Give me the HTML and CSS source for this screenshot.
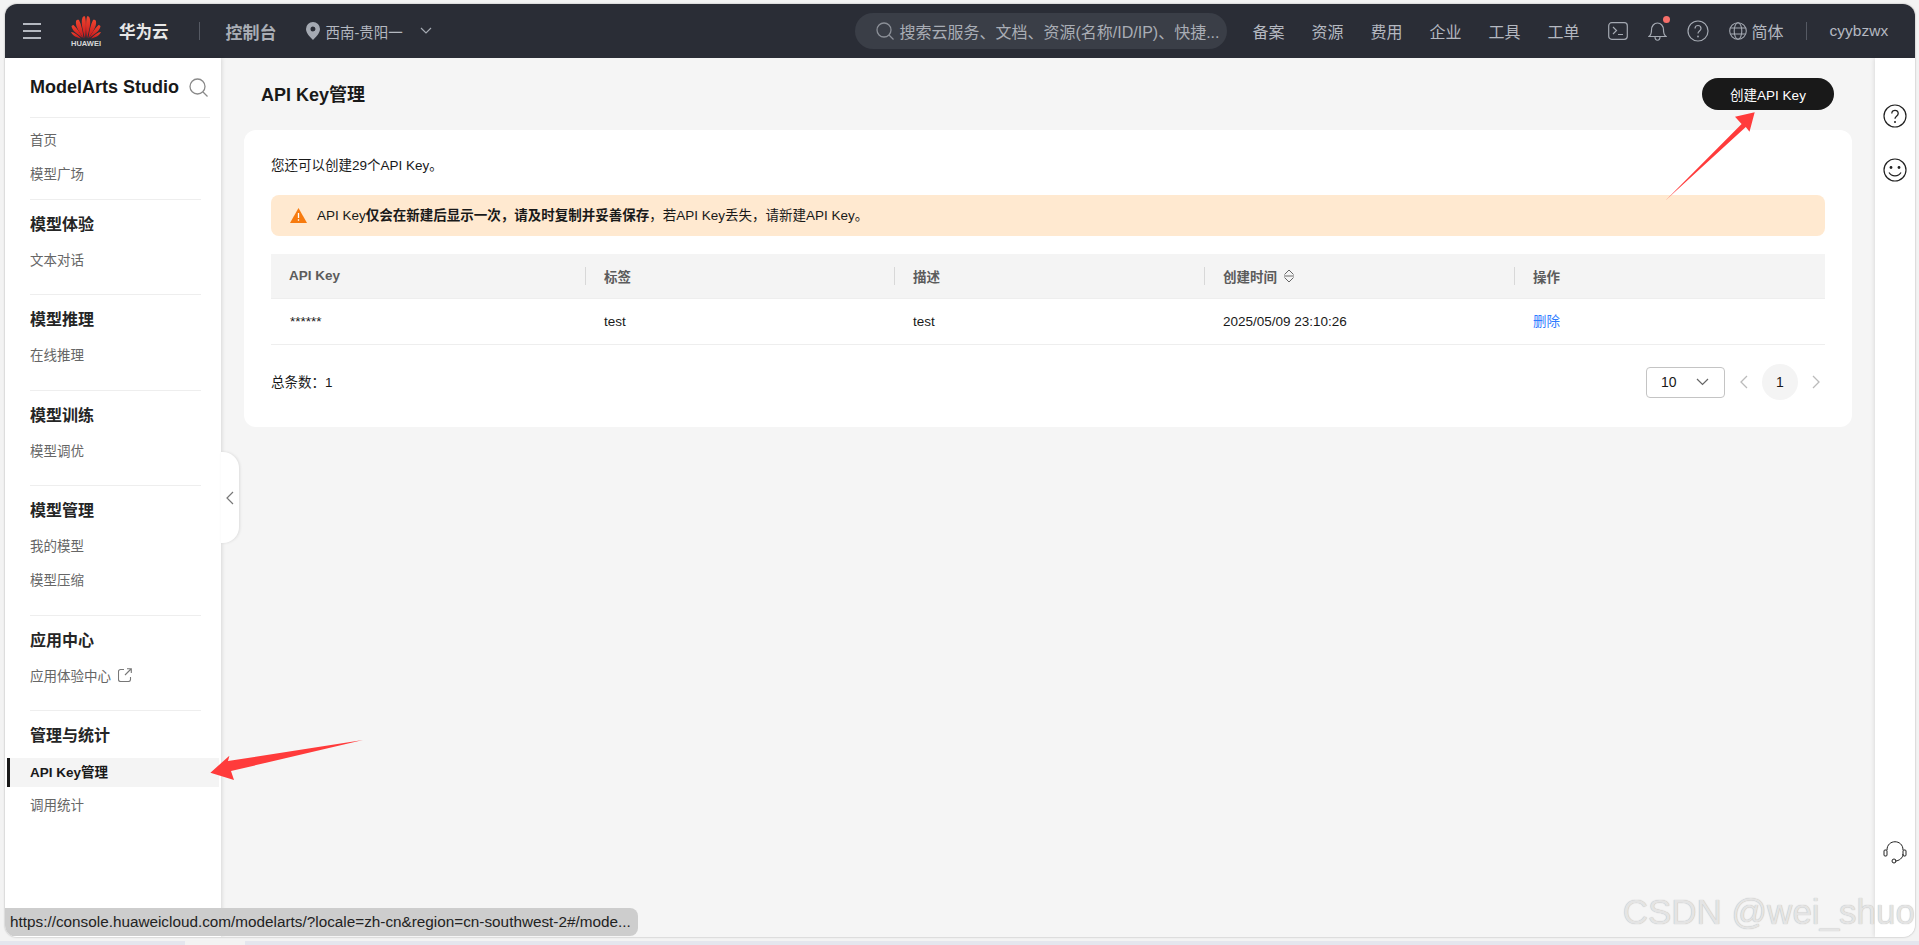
FILE: index.html
```html
<!DOCTYPE html>
<html lang="zh-CN">

<head>
    <meta charset="UTF-8">
    <meta name="viewport" content="width=device-width, initial-scale=1.0">
    <title>API Key管理 - ModelArts Studio</title>
    <link rel="stylesheet" href="styles.css">
</head>

<body>
    <div class="window">
        <header class="topbar">
            <svg class="menu-icon" width="18" height="16" viewBox="0 0 18 16">
                <path d="M0 1h18M0 8h18M0 15h18" stroke="#b4b8c0" stroke-width="2" fill="none" />
            </svg>
            <div class="logo">
                <svg width="30" height="23" viewBox="0 0 60 46">
                    <defs>
                        <linearGradient id="petal" x1="0" y1="0" x2="0" y2="1">
                            <stop offset="0" stop-color="#f0452f" />
                            <stop offset="1" stop-color="#c4161c" />
                        </linearGradient>
                    </defs>
                    <g fill="url(#petal)">
                        <path d="M28 45C24 30 19 12 23 3 25 0 27 0 28 1 31 12 30 30 28 45Z" />
                        <path d="M32 45C36 30 41 12 37 3 35 0 33 0 32 1 29 12 30 30 32 45Z" />
                        <path d="M25 45C18 33 8 22 10 10 11 8 14 7 16 8 21 18 24 32 25 45Z" />
                        <path d="M35 45C42 33 52 22 50 10 49 8 46 7 44 8 39 18 36 32 35 45Z" />
                        <path d="M23 44C15 37 4 32 1 21 1 20 3 18 5 18 13 25 19 35 23 44Z" />
                        <path d="M37 44C45 37 56 32 59 21 59 20 57 18 55 18 47 25 41 35 37 44Z" />
                        <path d="M20 45C13 43 5 42 0 32 6 32 14 38 20 45Z" />
                        <path d="M40 45C47 43 55 42 60 32 54 32 46 38 40 45Z" />
                    </g>
                </svg>
                <span class="logo-text">HUAWEI</span>
            </div>
            <span class="brand">华为云</span>
            <span class="bar-line"></span>
            <span class="console">控制台</span>
            <svg class="pin" width="14" height="18" viewBox="0 0 14 18">
                <path d="M7 0a7 7 0 0 0-7 7c0 4 4 8 7 11 3-3 7-7 7-11a7 7 0 0 0-7-7Zm0 9.5a2.5 2.5 0 1 1 0-5 2.5 2.5 0 0 1 0 5Z" fill="#a4a9b2" />
            </svg>
            <span class="region">西南-贵阳一</span>
            <svg class="region-arrow" width="12" height="8" viewBox="0 0 12 8">
                <path d="M1 1l5 5 5-5" stroke="#a4a9b2" stroke-width="1.2" fill="none" />
            </svg>

            <div class="search">
                <svg width="18" height="18" viewBox="0 0 18 18">
                    <circle cx="8" cy="8" r="7" stroke="#8b8f97" stroke-width="1.3" fill="none" />
                    <path d="M13 13l4.5 4.5" stroke="#8b8f97" stroke-width="1.3" />
                </svg>
                <span class="search-text">搜索云服务、文档、资源(名称/ID/IP)、快捷...</span>
            </div>

            <nav class="top-nav">
                <a>备案</a>
                <a>资源</a>
                <a>费用</a>
                <a>企业</a>
                <a>工具</a>
                <a>工单</a>
            </nav>

            <div class="top-icons">
                <svg width="20" height="18" viewBox="0 0 20 18">
                    <rect x="0.7" y="0.7" width="18.6" height="16.6" rx="3" stroke="#a4a9b2" stroke-width="1.2" fill="none" />
                    <path d="M5 5l3.5 3.5L5 12M10 12.5h5" stroke="#a4a9b2" stroke-width="1.2" fill="none" />
                </svg>
                <span class="bell">
                    <svg width="19" height="20" viewBox="0 0 19 20">
                        <path d="M1 15.5c2-1.5 2.5-3 2.5-6.5 0-4 2.5-7 6-7s6 3 6 7c0 3.5.5 5 2.5 6.5ZM7 15.5c0 5 5 5 5 0" stroke="#a4a9b2" stroke-width="1.2" fill="none" />
                    </svg>
                    <i class="dot"></i>
                </span>
                <svg width="22" height="22" viewBox="0 0 22 22">
                    <circle cx="11" cy="11" r="10" stroke="#a4a9b2" stroke-width="1.2" fill="none" />
                    <path d="M8 8.5c0-4 6-4 6 0 0 2.5-3 2.5-3 5" stroke="#a4a9b2" stroke-width="1.2" fill="none" />
                    <circle cx="11" cy="16.5" r="0.9" fill="#a4a9b2" />
                </svg>
                <span class="lang">
                    <svg width="18" height="18" viewBox="0 0 18 18">
                        <g stroke="#a4a9b2" stroke-width="1.1" fill="none">
                            <circle cx="9" cy="9" r="8.3" />
                            <ellipse cx="9" cy="9" rx="3.8" ry="8.3" />
                            <path d="M1.5 6h15M1.5 12h15" />
                        </g>
                    </svg>
                    简体
                </span>
            </div>
            <span class="bar-line user-line"></span>
            <span class="user">cyybzwx</span>
        </header>

        <div class="body-row">
            <aside class="sidebar">
                <div class="side-head">
                    <span class="side-title">ModelArts Studio</span>
                    <svg width="19" height="19" viewBox="0 0 19 19">
                        <circle cx="8.5" cy="8.5" r="7.5" stroke="#8a8a8a" stroke-width="1.3" fill="none" />
                        <path d="M14 14l4.5 4.5" stroke="#8a8a8a" stroke-width="1.3" />
                    </svg>
                </div>
                <div class="side-group first">
                    <a class="side-item">首页</a>
                    <a class="side-item">模型广场</a>
                </div>
                <div class="side-group">
                    <div class="side-label">模型体验</div>
                    <a class="side-item">文本对话</a>
                </div>
                <div class="side-group">
                    <div class="side-label">模型推理</div>
                    <a class="side-item">在线推理</a>
                </div>
                <div class="side-group">
                    <div class="side-label">模型训练</div>
                    <a class="side-item">模型调优</a>
                </div>
                <div class="side-group">
                    <div class="side-label">模型管理</div>
                    <a class="side-item">我的模型</a>
                    <a class="side-item">模型压缩</a>
                </div>
                <div class="side-group">
                    <div class="side-label">应用中心</div>
                    <a class="side-item">应用体验中心
                        <svg class="ext-icon" width="14" height="14" viewBox="0 0 14 14">
                            <path d="M6 1.5H2.5a2 2 0 0 0-2 2v8a2 2 0 0 0 2 2h8a2 2 0 0 0 2-2V9M7 7l6-6M9 .7h4.3V5" stroke="#777" stroke-width="1.1" fill="none" />
                        </svg>
                    </a>
                </div>
                <div class="side-group last">
                    <div class="side-label">管理与统计</div>
                    <a class="side-item active">API Key管理</a>
                    <a class="side-item">调用统计</a>
                </div>
                <div class="collapse">
                    <svg width="8" height="14" viewBox="0 0 8 14">
                        <path d="M7 1L1 7l6 6" stroke="#777" stroke-width="1.2" fill="none" />
                    </svg>
                </div>
            </aside>

            <main class="main">
                <div class="page-head">
                    <h1 class="page-title">API Key管理</h1>
                    <button class="create-btn">创建API Key</button>
                </div>

                <section class="card">
                    <p class="quota">您还可以创建29个API Key。</p>
                    <div class="alert">
                        <svg width="17" height="15" viewBox="0 0 17 15">
                            <path d="M8.5 0L17 15H0Z" fill="#f77b0f" />
                            <path d="M8.5 5v5M8.5 11.2v1.6" stroke="#fff" stroke-width="1.3" />
                        </svg>
                        <span class="alert-text">API Key<b>仅会在新建后显示一次&#65292;请及时复制并妥善保存</b>&#65292;若API Key丢失&#65292;请新建API Key。</span>
                    </div>

                    <div class="table">
                        <div class="thead">
                            <div class="cell"><span class="th-text key-head">API Key</span></div>
                            <div class="cell"><span class="th-text">标签</span></div>
                            <div class="cell"><span class="th-text">描述</span></div>
                            <div class="cell">
                                <span class="th-text">创建时间
                                    <svg class="sort" width="12" height="14" viewBox="0 0 12 14">
                                        <path d="M1.5 5.5L6 1l4.5 4.5M1.5 8.5L6 13l4.5-4.5" stroke="#666" fill="none" />
                                        <path d="M1 7h10" stroke="#999" stroke-width="1.5" />
                                    </svg>
                                </span>
                            </div>
                            <div class="cell"><span class="th-text">操作</span></div>
                        </div>
                        <div class="trow">
                            <div class="cell">******</div>
                            <div class="cell">test</div>
                            <div class="cell">test</div>
                            <div class="cell">2025/05/09 23:10:26</div>
                            <div class="cell"><a class="link">删除</a></div>
                        </div>
                    </div>

                    <div class="table-foot">
                        <span class="total">总条数&#65306;1</span>
                        <div class="pager">
                            <div class="page-size">
                                <span>10</span>
                                <svg width="13" height="8" viewBox="0 0 13 8">
                                    <path d="M1 1l5.5 5.5L12 1" stroke="#666" stroke-width="1.2" fill="none" />
                                </svg>
                            </div>
                            <svg class="page-arrow" width="8" height="14" viewBox="0 0 8 14">
                                <path d="M7 1L1 7l6 6" stroke="#bbb" stroke-width="1.3" fill="none" />
                            </svg>
                            <span class="page-num">1</span>
                            <svg class="page-arrow next" width="8" height="14" viewBox="0 0 8 14">
                                <path d="M1 1l6 6-6 6" stroke="#bbb" stroke-width="1.3" fill="none" />
                            </svg>
                        </div>
                    </div>
                </section>
            </main>

            <aside class="rail">
                <svg width="24" height="24" viewBox="0 0 24 24">
                    <circle cx="12" cy="12" r="11" stroke="#222" stroke-width="1.2" fill="none" />
                    <path d="M8.8 9.5c0-4.3 6.4-4.3 6.4 0 0 2.7-3.2 2.7-3.2 5.2" stroke="#222" stroke-width="1.3" fill="none" />
                    <circle cx="12" cy="18" r="1" fill="#222" />
                </svg>
                <svg class="smile" width="24" height="24" viewBox="0 0 24 24">
                    <circle cx="12" cy="12" r="11" stroke="#222" stroke-width="1.2" fill="none" />
                    <circle cx="8" cy="9.5" r="1.4" fill="#222" />
                    <circle cx="16" cy="9.5" r="1.4" fill="#222" />
                    <path d="M6 14.5c2.5 4.5 9.5 4.5 12 0" stroke="#222" stroke-width="1.2" fill="none" />
                </svg>
                <svg class="headset" width="24" height="24" viewBox="0 0 24 24">
                    <g stroke="#222" stroke-width="1" fill="none">
                        <path d="M4 10C4 -1 20 -1 20 10M20 14c0 4-4 7-8 7" />
                        <rect x="1" y="10" width="3" height="6" rx="1" />
                        <rect x="20" y="10" width="3" height="6" rx="1" />
                        <circle cx="11" cy="21" r="2" />
                    </g>
                </svg>
            </aside>
        </div>

        <div class="status-bubble">https://console.huaweicloud.com/modelarts/?locale=zh-cn&amp;region=cn-southwest-2#/mode...</div>
        <div class="watermark">CSDN @wei_shuo</div>
    </div>

    <div class="taskbar">
        <span class="task-a"></span>
        <span class="task-b"></span>
        <span class="task-a grow"></span>
    </div>

    <!-- red arrows drawn over the screenshot -->
    <svg class="arrows" width="1919" height="945" viewBox="0 0 1919 945">
        <polygon points="1666,200 1741.6,124 1735,116.7 1754.7,112.3 1749.5,131.7 1745.8,127" fill="#ff3b3b" />
        <polygon points="363,740 228,761 229.4,755.7 210.4,772.7 234,780 231,771" fill="#ff3b3b" />
    </svg>
</body>

</html>
```

FILE: styles.css
```css
* {
    box-sizing: border-box;
}

html,
body {
    margin: 0;
    padding: 0;
    height: 945px;
    overflow: hidden;
}

body {
    background-color: #f3f3f3;
    color: #191919;
    font-family: "Liberation Sans", "Noto Sans CJK SC", sans-serif;
    font-size: 13.5px;
    padding-top: 4px;
}

.window {
    position: relative;
    width: 1910px;
    height: 933px;
    margin-left: 5px;
    border-radius: 12px;
    overflow: hidden;
    display: flex;
    flex-direction: column;
    background-color: #f5f5f5;
    box-shadow: 0 0 2px rgba(0, 0, 0, 0.35);
}

/* top bar */
.topbar {
    height: 54px;
    flex-shrink: 0;
    background-color: #2a2d36;
    color: #b4b8c0;
    display: flex;
    align-items: center;
    font-size: 16px;
}

.menu-icon {
    margin-left: 18px;
}

.logo {
    margin-left: 30px;
    width: 30px;
    display: flex;
    flex-direction: column;
    align-items: center;
    margin-top: 2px;
}

.logo-text {
    color: #d8d8d8;
    font-size: 7.5px;
    font-weight: bold;
    line-height: 8px;
    margin-top: 1px;
}

.brand {
    margin-left: 18px;
    color: #e8e8e8;
    font-size: 16.5px;
    font-weight: bold;
}

.bar-line {
    width: 1px;
    height: 18px;
    background-color: #555963;
    margin-left: 30px;
}

.console {
    margin-left: 26px;
    color: #a9adb5;
    font-size: 17px;
    font-weight: bold;
}

.pin {
    margin-left: 29px;
}

.region {
    margin-left: 6px;
    font-size: 14.5px;
    width: 84px;
    white-space: nowrap;
}

.region-arrow {
    margin-left: 10px;
}

.search {
    margin-left: 423px;
    width: 372px;
    height: 36px;
    border-radius: 18px;
    background-color: #3a3e47;
    display: flex;
    align-items: center;
    padding-left: 21px;
    color: #a9adb5;
    font-size: 16px;
}

.search-text {
    margin-left: 6px;
    white-space: nowrap;
}

.top-nav {
    display: flex;
    gap: 27px;
    margin-left: 26px;
}

.top-icons {
    display: flex;
    align-items: center;
    margin-left: 28px;
    gap: 20px;
}

.bell {
    position: relative;
    display: flex;
}

.bell .dot {
    position: absolute;
    top: -5px;
    right: -3px;
    width: 7px;
    height: 7px;
    border-radius: 50%;
    background-color: #f66f6a;
}

.lang {
    display: flex;
    align-items: center;
    gap: 5px;
}

.user-line {
    margin-left: 22px;
}

.user {
    margin-left: 23px;
    font-size: 15.5px;
}

/* layout under the top bar */
.body-row {
    flex: 1;
    display: flex;
    min-height: 0;
}

.sidebar {
    position: relative;
    width: 216px;
    flex-shrink: 0;
    background-color: #fff;
    box-shadow: 1px 0 4px rgba(0, 0, 0, 0.12);
    z-index: 2;
}

.side-head {
    margin: 0 11px 0 25px;
    height: 60px;
    padding-bottom: 1px;
    border-bottom: 1px solid #eee;
    display: flex;
    align-items: center;
    justify-content: space-between;
}

.side-head svg {
    margin-right: 2px;
}

.side-title {
    font-size: 18px;
    font-weight: bold;
}

.side-group {
    padding-bottom: 19.4px;
    position: relative;
}

.side-group::after {
    content: "";
    position: absolute;
    left: 25px;
    bottom: 0;
    width: 171px;
    height: 1px;
    background-color: #eee;
}

.side-group.first {
    padding: 4px 0 10px;
}

.side-group.last::after {
    display: none;
}

.side-label {
    margin: 8px 0 0 25px;
    height: 34px;
    line-height: 34px;
    font-size: 16px;
    font-weight: bold;
    color: #252525;
}

.side-item {
    height: 34px;
    padding-left: 25px;
    display: flex;
    align-items: center;
    color: #666;
}

.side-item.active {
    height: 29px;
    margin: 5px 2px 0;
    padding: 0 0 2px 20px;
    border-left: 3px solid #191919;
    background-color: #f4f4f4;
    color: #191919;
    font-weight: bold;
}

.ext-icon {
    margin-left: 7px;
}

.collapse {
    position: absolute;
    left: 100%;
    top: 394px;
    width: 18px;
    height: 91px;
    background-color: #fff;
    border-radius: 0 16px 16px 0;
    box-shadow: 1px 0 3px rgba(0, 0, 0, 0.1);
    display: flex;
    align-items: center;
    justify-content: center;
}

/* main area */
.main {
    flex: 1;
    padding: 0 23px;
}

.page-head {
    height: 72px;
    padding: 0 18px 0 17px;
    display: flex;
    align-items: center;
    justify-content: space-between;
}

.page-title {
    margin: 0 0 2px;
    font-size: 18px;
    font-weight: bold;
}

.create-btn {
    width: 132px;
    height: 32px;
    border: none;
    border-radius: 16px;
    background-color: #191919;
    color: #fff;
    font-family: inherit;
    font-size: 13.5px;
}

.card {
    background-color: #fff;
    border-radius: 12px;
    padding: 26px 27px 27px;
}

.quota {
    margin: 0;
    line-height: 20px;
}

.alert {
    margin-top: 19px;
    height: 41px;
    background-color: #ffe9d0;
    border-radius: 8px;
    padding-left: 19px;
    display: flex;
    align-items: center;
    gap: 10px;
}

.alert-text {
    margin-bottom: 4px;
}

.table {
    margin-top: 18px;
}

.thead,
.trow {
    display: grid;
    grid-template-columns: 314px 309px 310px 310px 1fr;
    align-items: center;
}

.thead {
    height: 45px;
    background-color: #f4f4f4;
    border-bottom: 1px solid #eee;
    color: #5c5c5c;
}

.th-text {
    display: flex;
    align-items: center;
    height: 18px;
    margin-bottom: 1px;
    padding-left: 18px;
    border-left: 1px solid #d8d8d8;
    font-weight: bold;
}

.key-head {
    border-left: none;
}

.sort {
    margin-left: 6px;
}

.trow {
    height: 46px;
    border-bottom: 1px solid #eee;
}

.trow .cell {
    padding-left: 19px;
}

.link {
    display: block;
    margin-bottom: 3px;
    color: #2f7bff;
}

.table-foot {
    margin-top: 19px;
    height: 36px;
    display: flex;
    align-items: center;
    justify-content: space-between;
}

.total {
    margin-bottom: 3px;
}

.pager {
    display: flex;
    align-items: center;
}

.page-size {
    width: 79px;
    height: 31px;
    border: 1px solid #c4c4c4;
    border-radius: 4px;
    padding: 0 15px 0 14px;
    display: flex;
    align-items: center;
    justify-content: space-between;
    font-size: 14px;
}

.page-arrow {
    margin: 0 14px 0 15px;
}

.page-arrow.next {
    margin: 0 5px 0 14px;
}

.page-num {
    width: 36px;
    height: 36px;
    line-height: 36px;
    text-align: center;
    border-radius: 50%;
    background-color: #f4f4f4;
    font-size: 14px;
}

/* right rail */
.rail {
    width: 40px;
    flex-shrink: 0;
    background-color: #fff;
    box-shadow: -1px 0 4px rgba(0, 0, 0, 0.1);
    display: flex;
    flex-direction: column;
    align-items: center;
    padding-top: 46px;
}

.smile {
    margin-top: 30px;
}

.headset {
    margin-top: auto;
    margin-bottom: 73px;
}

/* things lying over the page */
.status-bubble {
    position: absolute;
    left: -1px;
    bottom: 1px;
    width: 634px;
    height: 28px;
    padding-left: 6px;
    line-height: 28px;
    background-color: #cdcdcd;
    border-radius: 0 8px 8px 8px;
    color: #222;
    font-size: 15.3px;
    white-space: nowrap;
    z-index: 3;
}

.watermark {
    position: absolute;
    right: 0;
    bottom: 4px;
    font-size: 35px;
    line-height: 42px;
    color: #e4e4e4;
    text-shadow: 0 0 1px #aaa;
    white-space: nowrap;
    z-index: 3;
}

.taskbar {
    margin-top: 4px;
    height: 4px;
    display: flex;
}

.task-a {
    width: 185px;
    background-color: #e4e6ee;
}

.task-b {
    width: 60px;
    background-color: #f3f3f3;
}

.grow {
    flex: 1;
}

.arrows {
    position: absolute;
    left: 0;
    top: 0;
    pointer-events: none;
    z-index: 5;
}
```
